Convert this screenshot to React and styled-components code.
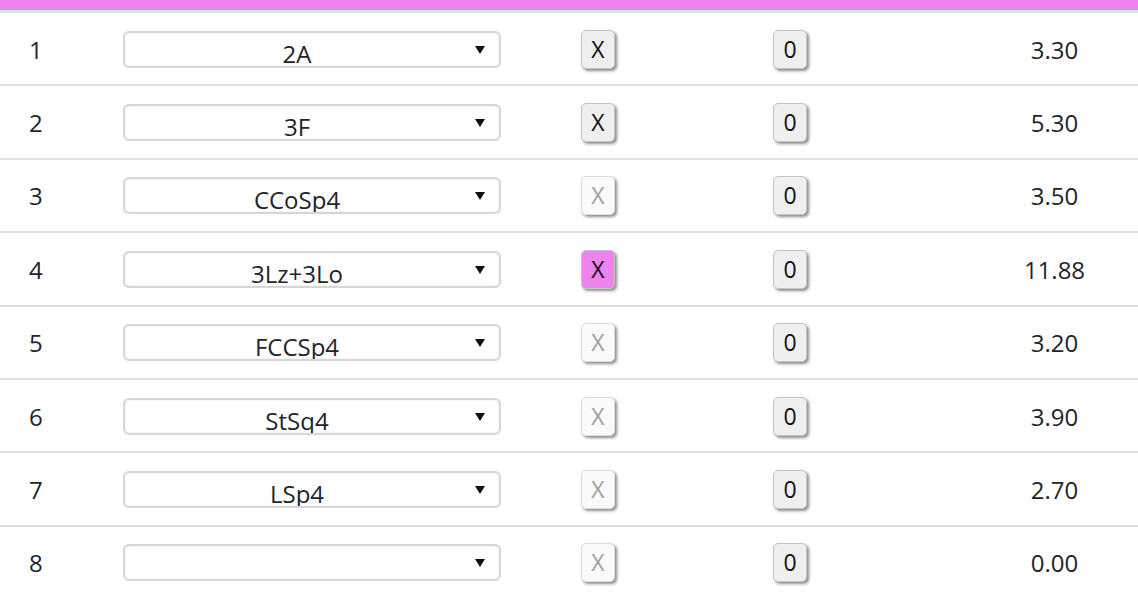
import styled, { createGlobalStyle } from "styled-components";

const GlobalStyle = createGlobalStyle`
  html, body {
    margin: 0;
    padding: 0;
    background: #fff;
  }
  body {
    font-family: "Open Sans", "Noto Sans", sans-serif;
    color: #212529;
  }
`;

const Table = styled.div`
  width: 1138px;
`;

const Head = styled.div`
  height: 10px;
  background-color: violet;
  border-bottom: 3px solid #dee2e6;
`;

const Row = styled.div`
  display: grid;
  grid-template-columns: 123px 378px 194px 190px 1fr;
  align-items: center;
  height: 73.4px;
  box-sizing: border-box;
  border-bottom: 2px solid #dee2e6;
  font-size: 24px;
  padding-top: 1px;
`;

const Num = styled.div`
  padding-left: 29px;
`;

const SelectWrap = styled.div`
  position: relative;
  height: 37px;
  box-sizing: border-box;
  border: 2px solid #d6d6d6;
  border-radius: 6px;
  background: #fff;
  box-shadow: inset 0 0 2px rgba(0, 0, 0, 0.12);
  overflow: hidden;

  &::after {
    content: "";
    position: absolute;
    right: 14px;
    top: 13px;
    border-left: 5px solid transparent;
    border-right: 5px solid transparent;
    border-top: 8px solid #111;
    pointer-events: none;
  }
`;

const Select = styled.select`
  appearance: none;
  display: block;
  width: 100%;
  height: 33px;
  margin-top: 4px;
  box-sizing: border-box;
  padding: 0 30px 0 0;
  border: none;
  background: transparent;
  font-family: inherit;
  font-size: 24px;
  color: #212529;
  text-align: center;
  text-align-last: center;
  outline: none;
`;

const Cell = styled.div`
  display: flex;
  justify-content: center;
`;

const Btn = styled.button`
  width: 34px;
  height: 39px;
  padding: 0;
  border: 1px solid ${({ $off }) => ($off ? "#dcdcdc" : "#c4c4c4")};
  border-radius: 5px;
  background: ${({ $active, $off }) =>
    $active ? "violet" : $off ? "#fafafa" : "#efefef"};
  color: ${({ $off }) => ($off ? "#a0a0a0" : "#111")};
  box-shadow: 2px 2px 3px rgba(0, 0, 0, 0.45);
  font-family: inherit;
  font-size: 23px;
  line-height: 37px;
`;

const Value = styled.div`
  padding-left: 86px;
  text-align: center;
`;

const rows = [
  { el: "2A", x: "on", value: "3.30" },
  { el: "3F", x: "on", value: "5.30" },
  { el: "CCoSp4", x: "off", value: "3.50" },
  { el: "3Lz+3Lo", x: "active", value: "11.88" },
  { el: "FCCSp4", x: "off", value: "3.20" },
  { el: "StSq4", x: "off", value: "3.90" },
  { el: "LSp4", x: "off", value: "2.70" },
  { el: "", x: "off", value: "0.00" },
];

function App() {
  return (
    <>
      <GlobalStyle />
      <Table>
        <Head />
        {rows.map((r, i) => (
          <Row key={i}>
            <Num>{i + 1}</Num>
            <SelectWrap>
              <Select defaultValue={r.el}>
                <option value={r.el}>{r.el}</option>
              </Select>
            </SelectWrap>
            <Cell>
              <Btn $off={r.x === "off"} $active={r.x === "active"}>
                X
              </Btn>
            </Cell>
            <Cell>
              <Btn>0</Btn>
            </Cell>
            <Value>{r.value}</Value>
          </Row>
        ))}
      </Table>
    </>
  );
}

export default App;
